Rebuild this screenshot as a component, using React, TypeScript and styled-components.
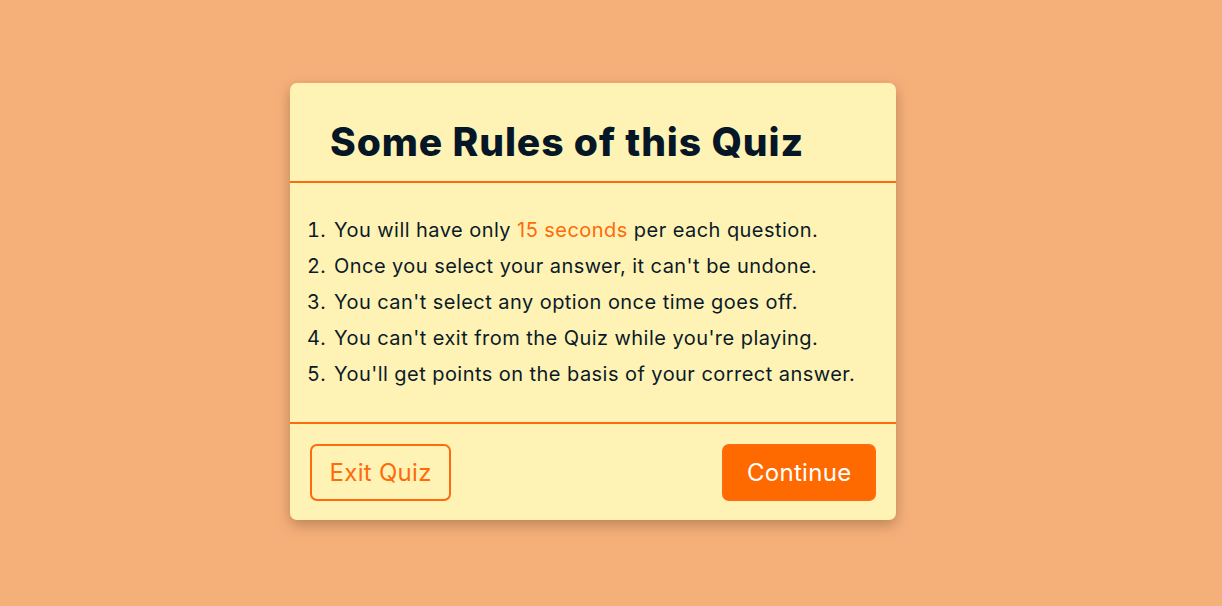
import React from "react";
import styled, { createGlobalStyle } from "styled-components";

const Global = createGlobalStyle`
  * { box-sizing: border-box; }
  html, body { margin: 0; padding: 0; }
  body {
    background: #f5b07a;
    font-family: "Inter", "Noto Sans", sans-serif;
  }
`;

const Page = styled.div`
  height: 606px;
  display: flex;
  align-items: center;
  justify-content: center;
  padding: 0 36px 4px 0;
`;

const Card = styled.div`
  width: 606px;
  height: 437px;
  background: #fef3b5;
  border-radius: 7px;
  box-shadow: 0 5px 14px rgba(90, 50, 20, 0.35);
  display: flex;
  flex-direction: column;
`;

const Header = styled.div`
  height: 100px;
  border-bottom: 2px solid #ff6a0a;
  display: flex;
  align-items: center;
  padding: 20px 0 0 40px;
`;

const Title = styled.h1`
  margin: 0;
  font-size: 39px;
  font-weight: 800;
  color: #051626;
  letter-spacing: 0.9px;
`;

const Rules = styled.ol`
  margin: 0;
  padding: 29px 20px 28px 42px;
  flex: 1;
  border-bottom: 2px solid #ff6a0a;
  list-style-position: outside;
`;

const Rule = styled.li`
  font-size: 20px;
  line-height: 36px;
  color: #0c1a28;
  padding-left: 2px;
  letter-spacing: 0.45px;
`;

const Highlight = styled.span`
  color: #ff6a0a;
`;

const Footer = styled.div`
  height: 96px;
  display: flex;
  align-items: center;
  justify-content: space-between;
  padding: 1px 20px 0;
`;

const Button = styled.button<{ $primary?: boolean }>`
  height: 57px;
  padding: 0 ${(p) => (p.$primary ? "22.5px" : "17.5px")};
  border-radius: 7px;
  font-family: inherit;
  font-size: 24px;
  font-weight: 400;
  letter-spacing: 0.3px;
  cursor: pointer;
  border: 2px solid #ff6a0a;
  background: ${(p) => (p.$primary ? "#ff6a00" : "transparent")};
  color: ${(p) => (p.$primary ? "#ffffff" : "#ff6a0a")};
`;

export default function App() {
  return (
    <>
      <Global />
      <Page>
        <Card>
          <Header>
            <Title>Some Rules of this Quiz</Title>
          </Header>
          <Rules>
            <Rule>
              You will have only <Highlight>15 seconds</Highlight> per each question.
            </Rule>
            <Rule>Once you select your answer, it can't be undone.</Rule>
            <Rule>You can't select any option once time goes off.</Rule>
            <Rule>You can't exit from the Quiz while you're playing.</Rule>
            <Rule>You'll get points on the basis of your correct answer.</Rule>
          </Rules>
          <Footer>
            <Button>Exit Quiz</Button>
            <Button $primary>Continue</Button>
          </Footer>
        </Card>
      </Page>
    </>
  );
}
